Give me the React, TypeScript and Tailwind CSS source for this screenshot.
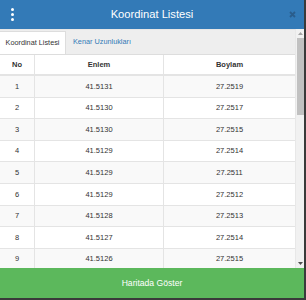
import React from "react";

const rows = [
  ["1", "41.5131", "27.2519"],
  ["2", "41.5130", "27.2517"],
  ["3", "41.5130", "27.2515"],
  ["4", "41.5129", "27.2514"],
  ["5", "41.5129", "27.2511"],
  ["6", "41.5129", "27.2512"],
  ["7", "41.5128", "27.2513"],
  ["8", "41.5127", "27.2514"],
  ["9", "41.5126", "27.2515"],
];

export default function App() {
  return (
    <div
      className="w-[306px] h-[300px] bg-[#3a3a3a] overflow-hidden"
      style={{ fontFamily: '"Liberation Sans", Arial, sans-serif' }}
    >
      <div className="w-[304px] h-[298px] flex flex-col bg-white">
        {/* Header */}
        <div className="h-[29px] bg-[#337ab7] flex items-center shrink-0">
          <div className="w-[24px] flex flex-col items-center gap-[2px] pl-[1px]">
            <span className="w-[3px] h-[3px] bg-white rounded-full" />
            <span className="w-[3px] h-[3px] bg-white rounded-full" />
            <span className="w-[3px] h-[3px] bg-white rounded-full" />
          </div>
          <div className="flex-1 text-center text-white text-[11.2px] leading-none">
            Koordinat Listesi
          </div>
          <div className="w-[24px] flex items-center justify-center">
            <svg width="7" height="7" viewBox="0 0 7 7">
              <path d="M1 1 L6 6 M6 1 L1 6" stroke="#2a5d8c" strokeWidth="1.8" />
            </svg>
          </div>
        </div>

        {/* Body */}
        <div className="flex-1 flex min-h-0">
          <div className="flex-1 flex flex-col min-w-0">
            {/* Tabs */}
            <div className="h-[25px] bg-[#eeeeee] flex items-end shrink-0 border-t border-[#e6e6e6]">
              <div className="h-[23px] w-[66px] bg-white border-r border-t border-[#dddddd] flex items-center justify-center text-[7.3px] text-[#333]">
                Koordinat Listesi
              </div>
              <div className="h-[23px] px-[7px] flex items-center text-[7.3px] text-[#337ab7]">
                Kenar Uzunlukları
              </div>
            </div>
            {/* Table */}
            <div className="flex-1 overflow-hidden border-t border-[#dddddd] text-[7.5px] text-[#333]">
              <div className="grid grid-cols-[35px_129px_1fr] h-[21px] bg-white border-b-2 border-[#e4e4e4] font-bold">
                <div className="flex items-center justify-center border-r border-[#e4e4e4]">No</div>
                <div className="flex items-center justify-center border-r border-[#e4e4e4]">Enlem</div>
                <div className="flex items-center justify-center">Boylam</div>
              </div>
              {rows.map((r, i) => (
                <div
                  key={r[0]}
                  className={`grid grid-cols-[35px_129px_1fr] h-[21.6px] border-b border-[#e4e4e4] ${
                    i % 2 === 0 ? "bg-[#f9f9f9]" : "bg-white"
                  }`}
                >
                  <div className="flex items-center justify-center border-r border-[#e4e4e4]">{r[0]}</div>
                  <div className="flex items-center justify-center border-r border-[#e4e4e4]">{r[1]}</div>
                  <div className="flex items-center justify-center">{r[2]}</div>
                </div>
              ))}
            </div>
          </div>
          {/* Scrollbar */}
          <div className="w-[9px] bg-[#f1f1f1] flex flex-col items-center shrink-0 border-l border-[#e8e8e8]">
            <div className="h-[9px] flex items-center justify-center">
              <svg width="5" height="3" viewBox="0 0 5 3">
                <path d="M0 3 L2.5 0 L5 3 Z" fill="#a3a3a3" />
              </svg>
            </div>
            <div className="w-[7px] h-[77px] bg-[#c1c1c1]" />
            <div className="flex-1" />
            <div className="h-[9px] flex items-center justify-center">
              <svg width="5" height="3" viewBox="0 0 5 3">
                <path d="M0 0 L5 0 L2.5 3 Z" fill="#505050" />
              </svg>
            </div>
          </div>
        </div>

        {/* Footer button */}
        <div className="h-[30px] bg-[#5cb85c] flex items-center justify-center text-white text-[8.6px] shrink-0">
          Haritada Göster
        </div>
      </div>
    </div>
  );
}
